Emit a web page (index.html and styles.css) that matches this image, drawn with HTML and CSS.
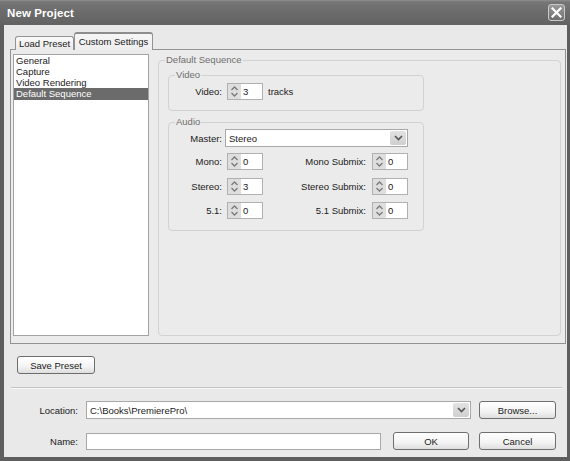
FILE: index.html
```html
<!DOCTYPE html>
<html>
<head>
<meta charset="utf-8">
<title>New Project</title>
<link rel="stylesheet" href="styles.css">
</head>
<body>
<div class="window">
  <div class="titlebar">
    <span class="title">New Project</span>
    <div class="close">
      <svg width="11" height="11" viewBox="0 0 11 11"><path d="M1.5 1.5 L9.5 9.5 M9.5 1.5 L1.5 9.5" stroke="#fff" stroke-width="2.2" stroke-linecap="square"/></svg>
    </div>
  </div>
  <div class="client">
    <div class="tabs">
      <div class="tab">Load Preset</div>
      <div class="tab active">Custom Settings</div>
    </div>
    <div class="panel">
      <ul class="list">
        <li>General</li>
        <li>Capture</li>
        <li>Video Rendering</li>
        <li class="sel">Default Sequence</li>
      </ul>
      <div class="group main">
        <span class="glabel">Default Sequence</span>
        <div class="group video">
          <span class="glabel">Video</span>
          <div class="vrow">
            <span class="lbl">Video:</span>
            <div class="spin"><span class="arrows"><svg width="9" height="13" viewBox="0 0 9 13"><path d="M1.5 5 L4.5 2 L7.5 5 M1.5 8 L4.5 11 L7.5 8" fill="none" stroke="#7a7a7a" stroke-width="1.3"/></svg></span><span class="val">3</span></div>
            <span class="unit">tracks</span>
          </div>
        </div>
        <div class="group audio">
          <span class="glabel">Audio</span>
          <div class="mrow">
            <span class="lbl">Master:</span>
            <div class="select master"><span class="stext">Stereo</span><span class="drop"><svg width="9" height="6" viewBox="0 0 9 6"><path d="M1 1 L4.5 4.5 L8 1" fill="none" stroke="#555" stroke-width="1.6"/></svg></span></div>
          </div>
          <div class="agrid">
            <span class="lbl">Mono:</span>
            <div class="spin"><span class="arrows"><svg width="9" height="13" viewBox="0 0 9 13"><path d="M1.5 5 L4.5 2 L7.5 5 M1.5 8 L4.5 11 L7.5 8" fill="none" stroke="#7a7a7a" stroke-width="1.3"/></svg></span><span class="val">0</span></div>
            <span class="lbl">Mono Submix:</span>
            <div class="spin"><span class="arrows"><svg width="9" height="13" viewBox="0 0 9 13"><path d="M1.5 5 L4.5 2 L7.5 5 M1.5 8 L4.5 11 L7.5 8" fill="none" stroke="#7a7a7a" stroke-width="1.3"/></svg></span><span class="val">0</span></div>

            <span class="lbl">Stereo:</span>
            <div class="spin"><span class="arrows"><svg width="9" height="13" viewBox="0 0 9 13"><path d="M1.5 5 L4.5 2 L7.5 5 M1.5 8 L4.5 11 L7.5 8" fill="none" stroke="#7a7a7a" stroke-width="1.3"/></svg></span><span class="val">3</span></div>
            <span class="lbl">Stereo Submix:</span>
            <div class="spin"><span class="arrows"><svg width="9" height="13" viewBox="0 0 9 13"><path d="M1.5 5 L4.5 2 L7.5 5 M1.5 8 L4.5 11 L7.5 8" fill="none" stroke="#7a7a7a" stroke-width="1.3"/></svg></span><span class="val">0</span></div>

            <span class="lbl">5.1:</span>
            <div class="spin"><span class="arrows"><svg width="9" height="13" viewBox="0 0 9 13"><path d="M1.5 5 L4.5 2 L7.5 5 M1.5 8 L4.5 11 L7.5 8" fill="none" stroke="#7a7a7a" stroke-width="1.3"/></svg></span><span class="val">0</span></div>
            <span class="lbl">5.1 Submix:</span>
            <div class="spin"><span class="arrows"><svg width="9" height="13" viewBox="0 0 9 13"><path d="M1.5 5 L4.5 2 L7.5 5 M1.5 8 L4.5 11 L7.5 8" fill="none" stroke="#7a7a7a" stroke-width="1.3"/></svg></span><span class="val">0</span></div>
          </div>
        </div>
      </div>
    </div>
    <div class="preset-row"><div class="btn save">Save Preset</div></div>
    <div class="sep"></div>
    <div class="frow loc">
      <span class="flbl">Location:</span>
      <div class="select path"><span class="stext">C:\Books\PremierePro\</span><span class="drop"><svg width="9" height="6" viewBox="0 0 9 6"><path d="M1 1 L4.5 4.5 L8 1" fill="none" stroke="#555" stroke-width="1.6"/></svg></span></div>
      <div class="btn browse">Browse...</div>
    </div>
    <div class="frow name">
      <span class="flbl">Name:</span>
      <div class="input"></div>
      <div class="btn ok">OK</div>
      <div class="btn cancel">Cancel</div>
    </div>
  </div>
</div>
</body>
</html>
```

FILE: styles.css
```css
html, body {
  margin: 0;
  padding: 0;
  background: #5f5f5f;
}
body {
  font-family: "Liberation Sans", Arial, sans-serif;
  font-size: 9.5px;
  color: #1a1a1a;
}
.window {
  width: 570px;
  height: 461px;
  background: #5e5e5e;
  display: flex;
  flex-direction: column;
}
.titlebar {
  height: 25px;
  flex: none;
  display: flex;
  align-items: center;
  justify-content: space-between;
  padding: 0 5px 0 7px;
  background: linear-gradient(#8e8e8e 0, #767676 2px, #6c6c6c 45%, #626262 100%);
}
.title {
  color: #fff;
  font-weight: bold;
  font-size: 11.5px;
  padding-top: 1px;
  letter-spacing: 0.1px;
}
.close {
  width: 17px;
  height: 17px;
  box-sizing: border-box;
  border: 1px solid #c9c9c9;
  border-radius: 3px;
  background: linear-gradient(#9a9a9a, #6f6f6f);
  display: flex;
  align-items: center;
  justify-content: center;
}
.client {
  margin: 0 3px 4px 4px;
  flex: 1;
  background: #e9e9e9;
}
.tabs {
  display: flex;
  align-items: flex-end;
  margin: 8px 0 0 11px;
  height: 17px;
  position: relative;
  z-index: 1;
  margin-bottom: -1px;
}
.tab {
  box-sizing: border-box;
  height: 14px;
  border: 1px solid #929292;
  border-bottom: none;
  border-radius: 3px 3px 0 0;
  background: linear-gradient(#fafafa, #e9e9e9);
  padding: 1px 0 0 0;
  line-height: 12px;
  width: 59px;
  text-align: center;
}
.tab.active {
  height: 18px;
  width: 79px;
  background: linear-gradient(#f6f6f6, #eeeeee);
  border-top: 2px solid #8d8d8d;
  padding-top: 0;
  line-height: 15px;
  margin-left: 0;
}
.panel {
  margin-left: 6px;
  width: 556px;
  height: 295px;
  box-sizing: border-box;
  border: 1px solid #929292;
  background: #ebebeb;
  display: flex;
  align-items: flex-start;
  padding: 4px 0 0 2px;
}
.list {
  list-style: none;
  margin: 0;
  padding: 0;
  width: 136px;
  height: 282px;
  box-sizing: border-box;
  border: 1px solid #a3a3a3;
  background: #fff;
}
.list li {
  height: 11px;
  line-height: 12px;
  padding-left: 2px;
  color: #1a1a1a;
}
.list li.sel {
  background: #6b6b6b;
  color: #fff;
  height: 12px;
}
.group {
  position: relative;
  box-sizing: border-box;
  border: 1px solid #d2d2d2;
  border-radius: 4px;
}
.glabel {
  position: absolute;
  top: -7px;
  left: 6px;
  padding: 0 1px;
  background: #ebebeb;
  color: #6e6e6e;
  line-height: 12px;
}
.main {
  margin: 6px 0 0 9px;
  width: 403px;
  height: 276px;
  padding: 14px 0 0 9px;
}
.video {
  width: 256px;
  height: 36px;
  padding-top: 7px;
}
.vrow {
  display: flex;
  align-items: center;
}
.lbl {
  text-align: right;
  white-space: nowrap;
}
.vrow .lbl {
  width: 53px;
  margin-right: 5px;
}
.unit {
  margin-left: 5px;
}
.spin {
  width: 36px;
  height: 17px;
  box-sizing: border-box;
  border: 1px solid #b0b0b0;
  background: #fff;
  display: flex;
  align-items: center;
}
.arrows {
  width: 13px;
  height: 15px;
  background: #dedede;
  display: flex;
  align-items: center;
  justify-content: center;
}
.val {
  padding-left: 2px;
}
.audio {
  margin-top: 11px;
  width: 256px;
  height: 109px;
  padding-top: 6px;
}
.mrow {
  display: flex;
  align-items: center;
}
.mrow .lbl {
  width: 53px;
  margin-right: 3px;
}
.select {
  box-sizing: border-box;
  height: 18px;
  border: 1px solid #a8a8a8;
  background: #fff;
  display: flex;
  align-items: center;
  justify-content: space-between;
  padding: 0 1px 0 3px;
}
.master {
  width: 183px;
}
.drop {
  width: 16px;
  height: 14px;
  border-radius: 2px;
  background: linear-gradient(#e2e2e2, #cfcfcf);
  display: flex;
  align-items: center;
  justify-content: center;
}
.agrid {
  margin-top: 6px;
  display: grid;
  grid-template-columns: 53px 36px 98px 36px;
  column-gap: 5px;
  row-gap: 7.5px;
  align-items: center;
  grid-auto-rows: 17px;
}
.agrid .spin:nth-child(4n) {
  margin-left: 1px;
}
.preset-row {
  margin: 12px 0 0 13px;
}
.btn {
  box-sizing: border-box;
  height: 18px;
  border: 1px solid #6e6e6e;
  border-radius: 3px;
  background: linear-gradient(#ffffff, #f3f3f3 60%, #dedede);
  display: flex;
  align-items: center;
  justify-content: center;
  color: #1a1a1a;
}
.save {
  width: 78px;
}
.sep {
  margin: 13px 0 0 7px;
  width: 551px;
  height: 0;
  border-top: 1px solid #c4c4c4;
  border-bottom: 1px solid #f7f7f7;
}
.frow {
  display: flex;
  align-items: center;
}
.loc {
  margin-top: 12px;
}
.name {
  margin-top: 13px;
}
.flbl {
  width: 74px;
  text-align: right;
  margin-right: 8px;
}
.path {
  width: 385px;
}
.browse {
  width: 77px;
  margin-left: 8px;
}
.input {
  box-sizing: border-box;
  width: 295px;
  height: 17px;
  border: 1px solid #a8a8a8;
  background: #fff;
}
.ok {
  width: 76px;
  margin-left: 12px;
}
.cancel {
  width: 77px;
  margin-left: 10px;
}
```
